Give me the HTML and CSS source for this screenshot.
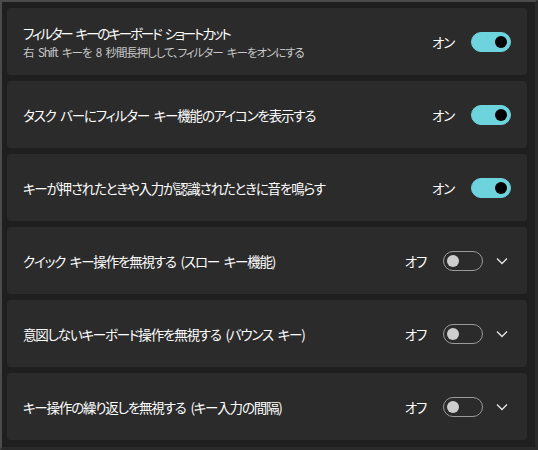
FILE: index.html
```html
<!DOCTYPE html>
<html lang="ja">
<head>
  <meta charset="UTF-8">
  <title>フィルター キー</title>
  <link rel="stylesheet" href="styles.css">
</head>
<body>
  <div class="frame">
    <div class="card">
      <div class="card-text">
        <div class="title kana">フィルター キーのキーボード ショートカット</div>
        <div class="subtitle">右 Shift キーを 8 秒間長押しして、フィルター キーをオンにする</div>
      </div>
      <span class="state">オン</span>
      <span class="toggle on"><span class="knob"></span></span>
    </div>

    <div class="card">
      <div class="card-text">
        <div class="title">タスク バーにフィルター キー機能のアイコンを表示する</div>
      </div>
      <span class="state">オン</span>
      <span class="toggle on"><span class="knob"></span></span>
    </div>

    <div class="card">
      <div class="card-text">
        <div class="title">キーが押されたときや入力が認識されたときに音を鳴らす</div>
      </div>
      <span class="state">オン</span>
      <span class="toggle on"><span class="knob"></span></span>
    </div>

    <div class="card expand">
      <div class="card-text">
        <div class="title">クイック キー操作を無視する (スロー キー機能)</div>
      </div>
      <span class="state">オフ</span>
      <span class="toggle"><span class="knob"></span></span>
      <svg class="chevron" width="12" height="8" viewBox="0 0 12 8"><path d="M1 1.5 L6 6.5 L11 1.5" fill="none" stroke="#e6e6e6" stroke-width="1.3"/></svg>
    </div>

    <div class="card expand">
      <div class="card-text">
        <div class="title">意図しないキーボード操作を無視する (バウンス キー)</div>
      </div>
      <span class="state">オフ</span>
      <span class="toggle"><span class="knob"></span></span>
      <svg class="chevron" width="12" height="8" viewBox="0 0 12 8"><path d="M1 1.5 L6 6.5 L11 1.5" fill="none" stroke="#e6e6e6" stroke-width="1.3"/></svg>
    </div>

    <div class="card expand">
      <div class="card-text">
        <div class="title">キー操作の繰り返しを無視する (キー入力の間隔)</div>
      </div>
      <span class="state">オフ</span>
      <span class="toggle"><span class="knob"></span></span>
      <svg class="chevron" width="12" height="8" viewBox="0 0 12 8"><path d="M1 1.5 L6 6.5 L11 1.5" fill="none" stroke="#e6e6e6" stroke-width="1.3"/></svg>
    </div>
  </div>
</body>
</html>
```

FILE: styles.css
```css
body {
  margin: 0;
  background-color: #1f1f1f;
  font-family: "Noto Sans CJK JP", "Noto Sans", sans-serif;
  font-feature-settings: "palt";
  color: #fff;
}

.frame {
  box-sizing: border-box;
  width: 538px;
  height: 450px;
  border-top: 2px solid #4b4b4b;
  border-left: 2px solid #4b4b4b;
  border-right: 3px solid #2a2a2a;
  border-bottom: 3px solid #2a2a2a;
  padding: 6px 8px 0 5px;
  display: flex;
  flex-direction: column;
  gap: 6px;
}

.card {
  height: 67px;
  flex-shrink: 0;
  background: #2b2b2b;
  border-radius: 4px;
  display: flex;
  align-items: center;
  padding: 0 16px;
}

.card.expand {
  padding-right: 19px;
}

.card-text {
  flex: 1;
}

.title {
  font-size: 13.5px;
  line-height: 18px;
  letter-spacing: -1.2px;
  word-spacing: 3px;
}

.title.kana {
  letter-spacing: -2.1px;
}

.subtitle {
  font-size: 11.5px;
  line-height: 16px;
  letter-spacing: -1.1px;
  word-spacing: 3px;
  color: #c8c8c8;
  margin-top: 2px;
}

.state {
  font-size: 13.5px;
  letter-spacing: -1.2px;
  margin-right: 17px;
}

.toggle {
  box-sizing: border-box;
  width: 40px;
  height: 20px;
  border-radius: 10px;
  border: 1px solid #9a9a9a;
  display: flex;
  align-items: center;
  padding: 0 3px;
}

.toggle .knob {
  width: 12px;
  height: 12px;
  border-radius: 50%;
  background: #cecece;
}

.toggle.on {
  background: #6dd3dc;
  border-color: #6dd3dc;
  justify-content: flex-end;
}

.toggle.on .knob {
  background: #000;
}

.chevron {
  margin-left: 13px;
}
```
